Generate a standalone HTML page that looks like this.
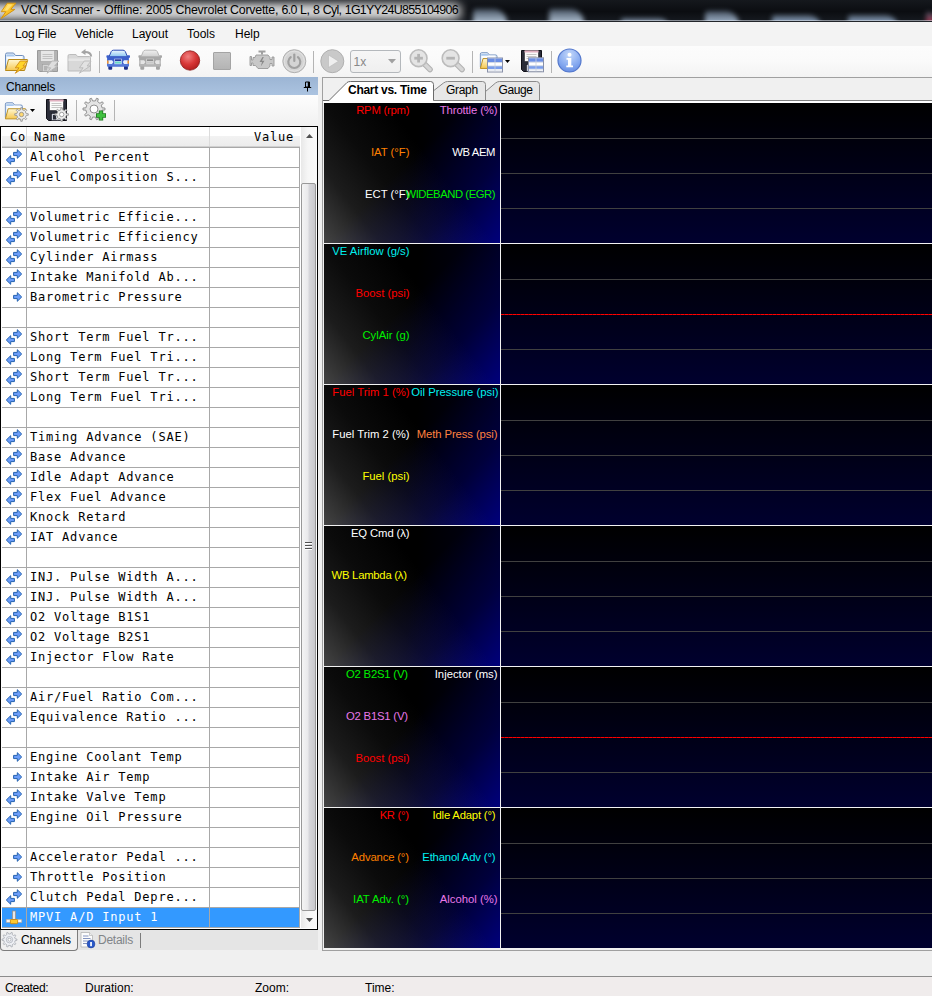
<!DOCTYPE html>
<html><head><meta charset="utf-8"><title>VCM Scanner</title>
<style>
*{box-sizing:border-box;margin:0;padding:0}
html,body{width:932px;height:996px;overflow:hidden;background:#f0f0f0}
body{position:relative;font-family:"Liberation Sans",sans-serif;font-size:12px;color:#000}
.a{position:absolute}
.t{position:absolute;white-space:nowrap;line-height:1}
#title{left:0;top:0;width:932px;height:21px;background:linear-gradient(#15181d,#0b0d11 55%,#161a20);overflow:hidden}
#menubar{left:0;top:22px;width:932px;height:24px;background:#f3f3f3}
#toolbar{left:0;top:46px;width:932px;height:31px;background:linear-gradient(#fcfcfc,#fafafa 50%,#f3f3f3)}
.sep{position:absolute;width:1px;background:#b4b4b4;top:51px;height:22px}
#chhead{left:0;top:77px;width:318px;height:18px;background:linear-gradient(#9cb5d4,#abc3e0)}
#chtool{left:0;top:95px;width:318px;height:31px;background:linear-gradient(#fdfdfd,#f1f1f1)}
#tbl{left:0;top:126px;width:318px;height:804px;border:1px solid #000;border-right-color:#000;background:#fff;overflow:hidden}
.mono{font-family:"DejaVu Sans Mono","Liberation Mono",monospace;font-size:12px;letter-spacing:.8px}
.row{position:absolute;left:0;width:298px;height:20px;border-bottom:1px solid #a8a8a8;border-right:1px solid #a8a8a8}
.row .c1{position:absolute;left:24px;top:0;width:1px;height:20px;background:#a8a8a8}
.row .c2{position:absolute;left:207px;top:0;width:1px;height:20px;background:#a8a8a8}
.row .nm{position:absolute;left:28px;top:2px;white-space:nowrap;line-height:14px}
.row .ri{position:absolute;left:0;top:0}
.sel{background:#3399ff;color:#fff}
#rp{left:322px;top:77px;width:612px;height:874px;border:1px solid #a0a0a0;background:#f0f0f0}
.pan{position:absolute;left:324px;width:176px;height:140px;background:linear-gradient(232deg,#000 40%,#0b0b0b 62%,#1c1c1c 80%,#444 100%),linear-gradient(135deg,#000 45%,#000028 74%,#00006a 100%),linear-gradient(97deg,#000 50%,#00001e 100%);background-blend-mode:screen}
.plot{position:absolute;left:501px;width:431px;height:140px;background:linear-gradient(#000,#00002e)}
.gl{position:absolute;left:501px;width:431px;height:1px;background:#404040}
.lg{position:absolute;white-space:nowrap;font-size:11.300px;line-height:12px;text-align:right}
#status{left:0;top:976px;width:932px;height:20px;background:#f0ecec;border-top:1px solid #8c8c8c}
</style></head><body>
<div class="a" id="title"><div class="a" style="left:473px;top:7px;width:34px;height:19px;margin-top:2px;background:linear-gradient(rgba(150,175,205,.5),#c5d8ec 70%);filter:blur(2.500px);border-radius:3px 14px 0 0;opacity:.85"></div><div class="a" style="left:549px;top:7px;width:35px;height:19px;margin-top:2px;background:linear-gradient(rgba(150,175,205,.5),#c5d8ec 70%);filter:blur(2.500px);border-radius:3px 14px 0 0;opacity:.85"></div><div class="a" style="left:621px;top:16px;width:48px;height:10px;margin-top:2px;background:linear-gradient(rgba(150,175,205,.5),#b8cde6 70%);filter:blur(2.500px);border-radius:3px 14px 0 0;opacity:.85"></div><div class="a" style="left:705px;top:9px;width:34px;height:17px;margin-top:2px;background:linear-gradient(rgba(150,175,205,.5),#b8cde6 70%);filter:blur(2.500px);border-radius:3px 14px 0 0;opacity:.85"></div><div class="a" style="left:772px;top:13px;width:49px;height:13px;margin-top:2px;background:linear-gradient(rgba(150,175,205,.5),#a8c4e6 70%);filter:blur(2.500px);border-radius:3px 14px 0 0;opacity:.85"></div><div class="a" style="left:848px;top:13px;width:50px;height:13px;margin-top:2px;background:linear-gradient(rgba(150,175,205,.5),#a8c4e6 70%);filter:blur(2.500px);border-radius:3px 14px 0 0;opacity:.85"></div><div class="a" style="left:926px;top:10px;width:10px;height:16px;margin-top:2px;background:linear-gradient(rgba(150,175,205,.5),#c03050 70%);filter:blur(2.500px);border-radius:3px 14px 0 0;opacity:.85"></div><div class="a" style="left:-20px;top:3px;width:482px;height:17px;background:#fff;filter:blur(5px);opacity:.76;border-radius:8px"></div><div class="a" style="left:-20px;top:6px;width:470px;height:11px;background:#fff;filter:blur(3px);opacity:.3;border-radius:6px"></div><svg class="a" style="left:0;top:0" width="18" height="20" viewBox="0 0 18 20"><defs><linearGradient id="bg1" x1="0" y1="0" x2="1" y2="1"><stop offset="0" stop-color="#ffe470"/><stop offset=".5" stop-color="#fcc428"/><stop offset="1" stop-color="#f0b020"/></linearGradient></defs><path d="M7.300 3.200H15.800L10.800 9.400H14.800L1.200 18.500 5.800 11.700H1.200Z" fill="url(#bg1)" stroke="#d49410" stroke-width="1" stroke-linejoin="round"/><path d="M8.300 4.500H12.500L7.500 10.500H4.500Z" fill="#fff0a0" opacity=".55"/></svg><div class="a" id="ttxt" style="left:0;top:0;font-size:12.400px;color:#000"><span class="t" style="left:21.0px;top:4px;letter-spacing:-0.382px">VCM</span> <span class="t" style="left:50.7px;top:4px;letter-spacing:-0.551px">Scanner</span> <span class="t" style="left:96.3px;top:4px;letter-spacing:0.259px">-</span> <span class="t" style="left:104.0px;top:4px;letter-spacing:-0.066px">Offline:</span> <span class="t" style="left:145.8px;top:4px;letter-spacing:-0.295px">2005</span> <span class="t" style="left:175.5px;top:4px;letter-spacing:-0.203px">Chevrolet</span> <span class="t" style="left:230.0px;top:4px;letter-spacing:-0.231px">Corvette,</span> <span class="t" style="left:281.5px;top:4px;letter-spacing:-0.678px">6.0</span> <span class="t" style="left:300.0px;top:4px;letter-spacing:-0.322px">L,</span> <span class="t" style="left:313.0px;top:4px;letter-spacing:-0.506px">8</span> <span class="t" style="left:322.7px;top:4px;letter-spacing:-0.661px">Cyl,</span> <span class="t" style="left:344.7px;top:4px;letter-spacing:-0.671px">1G1YY24U855104906</span></div></div><div class="a" style="left:0;top:20px;width:932px;height:1px;background:rgba(225,232,240,.55)"></div><div class="a" style="left:0;top:21px;width:932px;height:1px;background:#23262b"></div><div class="a" id="menubar"><div class="t mi" style="left:15px;top:6px;letter-spacing:-0.18px">Log File</div><div class="t mi" style="left:75px;top:6px;letter-spacing:0px">Vehicle</div><div class="t mi" style="left:132px;top:6px;letter-spacing:0px">Layout</div><div class="t mi" style="left:187px;top:6px;letter-spacing:0px">Tools</div><div class="t mi" style="left:235px;top:6px;letter-spacing:0px">Help</div></div><div class="a" id="toolbar"></div><div class="a" id="chhead"><div class="t" style="left:6px;top:4px;letter-spacing:-.2px">Channels</div><svg class="a" style="left:303px;top:4px" width="9" height="11" viewBox="0 0 9 11"><path d="M2.5 1h4v5h-4z" fill="none" stroke="#000" stroke-width="1"/><path d="M5.5 1v5" stroke="#000" stroke-width="1.4"/><path d="M.8 6.5h7.4M4.5 6.5v4" stroke="#000" stroke-width="1"/></svg></div><div class="a" id="chtool"></div><div class="a mono" id="tbl"><div class="a" style="left:1px;top:0;width:315px;height:802px"><div class="a" style="left:0;top:0;width:298px;height:20px;background:linear-gradient(#fff,#fff 45%,#f2f2f2 50%,#ececec);border-bottom:1px solid #d0d0d0"></div><div class="a" style="left:0;top:20px;width:298px;height:1px;background:#a8a8a8"></div><div class="a" style="left:24px;top:0;width:1px;height:19px;background:#dcdcdc"></div><div class="a" style="left:207px;top:0;width:1px;height:19px;background:#dcdcdc"></div><div class="t" style="left:8px;top:4px">Co</div><div class="t" style="left:32px;top:4px">Name</div><div class="t" style="left:252px;top:4px">Value</div><div class="row" style="top:21px"><svg class="ri" width="24" height="19" viewBox="0 0 24 19"><path d="M11.600 4.400H15.300V1.700L19.700 6 15.300 10.300V7.600H11.600Z" fill="#6a9cf8" stroke="#2462b0" stroke-width="1" stroke-linejoin="round"/><path d="M12.400 10.400H8.700V7.700L4.300 12 8.700 16.300V13.600H12.400Z" fill="#6a9cf8" stroke="#2462b0" stroke-width="1" stroke-linejoin="round"/></svg><i class="c1"></i><i class="c2"></i><span class="nm">Alcohol Percent</span></div><div class="row" style="top:41px"><svg class="ri" width="24" height="19" viewBox="0 0 24 19"><path d="M11.600 4.400H15.300V1.700L19.700 6 15.300 10.300V7.600H11.600Z" fill="#6a9cf8" stroke="#2462b0" stroke-width="1" stroke-linejoin="round"/><path d="M12.400 10.400H8.700V7.700L4.300 12 8.700 16.300V13.600H12.400Z" fill="#6a9cf8" stroke="#2462b0" stroke-width="1" stroke-linejoin="round"/></svg><i class="c1"></i><i class="c2"></i><span class="nm">Fuel Composition S...</span></div><div class="row" style="top:61px"><i class="c1"></i><i class="c2"></i></div><div class="row" style="top:81px"><svg class="ri" width="24" height="19" viewBox="0 0 24 19"><path d="M11.600 4.400H15.300V1.700L19.700 6 15.300 10.300V7.600H11.600Z" fill="#6a9cf8" stroke="#2462b0" stroke-width="1" stroke-linejoin="round"/><path d="M12.400 10.400H8.700V7.700L4.300 12 8.700 16.300V13.600H12.400Z" fill="#6a9cf8" stroke="#2462b0" stroke-width="1" stroke-linejoin="round"/></svg><i class="c1"></i><i class="c2"></i><span class="nm">Volumetric Efficie...</span></div><div class="row" style="top:101px"><svg class="ri" width="24" height="19" viewBox="0 0 24 19"><path d="M11.600 4.400H15.300V1.700L19.700 6 15.300 10.300V7.600H11.600Z" fill="#6a9cf8" stroke="#2462b0" stroke-width="1" stroke-linejoin="round"/><path d="M12.400 10.400H8.700V7.700L4.300 12 8.700 16.300V13.600H12.400Z" fill="#6a9cf8" stroke="#2462b0" stroke-width="1" stroke-linejoin="round"/></svg><i class="c1"></i><i class="c2"></i><span class="nm">Volumetric Efficiency</span></div><div class="row" style="top:121px"><svg class="ri" width="24" height="19" viewBox="0 0 24 19"><path d="M11.600 4.400H15.300V1.700L19.700 6 15.300 10.300V7.600H11.600Z" fill="#6a9cf8" stroke="#2462b0" stroke-width="1" stroke-linejoin="round"/><path d="M12.400 10.400H8.700V7.700L4.300 12 8.700 16.300V13.600H12.400Z" fill="#6a9cf8" stroke="#2462b0" stroke-width="1" stroke-linejoin="round"/></svg><i class="c1"></i><i class="c2"></i><span class="nm">Cylinder Airmass</span></div><div class="row" style="top:141px"><svg class="ri" width="24" height="19" viewBox="0 0 24 19"><path d="M11.600 4.400H15.300V1.700L19.700 6 15.300 10.300V7.600H11.600Z" fill="#6a9cf8" stroke="#2462b0" stroke-width="1" stroke-linejoin="round"/><path d="M12.400 10.400H8.700V7.700L4.300 12 8.700 16.300V13.600H12.400Z" fill="#6a9cf8" stroke="#2462b0" stroke-width="1" stroke-linejoin="round"/></svg><i class="c1"></i><i class="c2"></i><span class="nm">Intake Manifold Ab...</span></div><div class="row" style="top:161px"><svg class="ri" width="24" height="19" viewBox="0 0 24 19"><path d="M11.600 7.400H15.300V4.700L19.700 9 15.300 13.300V10.600H11.600Z" fill="#6a9cf8" stroke="#2462b0" stroke-width="1" stroke-linejoin="round"/></svg><i class="c1"></i><i class="c2"></i><span class="nm">Barometric Pressure</span></div><div class="row" style="top:181px"><i class="c1"></i><i class="c2"></i></div><div class="row" style="top:201px"><svg class="ri" width="24" height="19" viewBox="0 0 24 19"><path d="M11.600 4.400H15.300V1.700L19.700 6 15.300 10.300V7.600H11.600Z" fill="#6a9cf8" stroke="#2462b0" stroke-width="1" stroke-linejoin="round"/><path d="M12.400 10.400H8.700V7.700L4.300 12 8.700 16.300V13.600H12.400Z" fill="#6a9cf8" stroke="#2462b0" stroke-width="1" stroke-linejoin="round"/></svg><i class="c1"></i><i class="c2"></i><span class="nm">Short Term Fuel Tr...</span></div><div class="row" style="top:221px"><svg class="ri" width="24" height="19" viewBox="0 0 24 19"><path d="M11.600 4.400H15.300V1.700L19.700 6 15.300 10.300V7.600H11.600Z" fill="#6a9cf8" stroke="#2462b0" stroke-width="1" stroke-linejoin="round"/><path d="M12.400 10.400H8.700V7.700L4.300 12 8.700 16.300V13.600H12.400Z" fill="#6a9cf8" stroke="#2462b0" stroke-width="1" stroke-linejoin="round"/></svg><i class="c1"></i><i class="c2"></i><span class="nm">Long Term Fuel Tri...</span></div><div class="row" style="top:241px"><svg class="ri" width="24" height="19" viewBox="0 0 24 19"><path d="M11.600 4.400H15.300V1.700L19.700 6 15.300 10.300V7.600H11.600Z" fill="#6a9cf8" stroke="#2462b0" stroke-width="1" stroke-linejoin="round"/><path d="M12.400 10.400H8.700V7.700L4.300 12 8.700 16.300V13.600H12.400Z" fill="#6a9cf8" stroke="#2462b0" stroke-width="1" stroke-linejoin="round"/></svg><i class="c1"></i><i class="c2"></i><span class="nm">Short Term Fuel Tr...</span></div><div class="row" style="top:261px"><svg class="ri" width="24" height="19" viewBox="0 0 24 19"><path d="M11.600 4.400H15.300V1.700L19.700 6 15.300 10.300V7.600H11.600Z" fill="#6a9cf8" stroke="#2462b0" stroke-width="1" stroke-linejoin="round"/><path d="M12.400 10.400H8.700V7.700L4.300 12 8.700 16.300V13.600H12.400Z" fill="#6a9cf8" stroke="#2462b0" stroke-width="1" stroke-linejoin="round"/></svg><i class="c1"></i><i class="c2"></i><span class="nm">Long Term Fuel Tri...</span></div><div class="row" style="top:281px"><i class="c1"></i><i class="c2"></i></div><div class="row" style="top:301px"><svg class="ri" width="24" height="19" viewBox="0 0 24 19"><path d="M11.600 4.400H15.300V1.700L19.700 6 15.300 10.300V7.600H11.600Z" fill="#6a9cf8" stroke="#2462b0" stroke-width="1" stroke-linejoin="round"/><path d="M12.400 10.400H8.700V7.700L4.300 12 8.700 16.300V13.600H12.400Z" fill="#6a9cf8" stroke="#2462b0" stroke-width="1" stroke-linejoin="round"/></svg><i class="c1"></i><i class="c2"></i><span class="nm">Timing Advance (SAE)</span></div><div class="row" style="top:321px"><svg class="ri" width="24" height="19" viewBox="0 0 24 19"><path d="M11.600 4.400H15.300V1.700L19.700 6 15.300 10.300V7.600H11.600Z" fill="#6a9cf8" stroke="#2462b0" stroke-width="1" stroke-linejoin="round"/><path d="M12.400 10.400H8.700V7.700L4.300 12 8.700 16.300V13.600H12.400Z" fill="#6a9cf8" stroke="#2462b0" stroke-width="1" stroke-linejoin="round"/></svg><i class="c1"></i><i class="c2"></i><span class="nm">Base Advance</span></div><div class="row" style="top:341px"><svg class="ri" width="24" height="19" viewBox="0 0 24 19"><path d="M11.600 4.400H15.300V1.700L19.700 6 15.300 10.300V7.600H11.600Z" fill="#6a9cf8" stroke="#2462b0" stroke-width="1" stroke-linejoin="round"/><path d="M12.400 10.400H8.700V7.700L4.300 12 8.700 16.300V13.600H12.400Z" fill="#6a9cf8" stroke="#2462b0" stroke-width="1" stroke-linejoin="round"/></svg><i class="c1"></i><i class="c2"></i><span class="nm">Idle Adapt Advance</span></div><div class="row" style="top:361px"><svg class="ri" width="24" height="19" viewBox="0 0 24 19"><path d="M11.600 4.400H15.300V1.700L19.700 6 15.300 10.300V7.600H11.600Z" fill="#6a9cf8" stroke="#2462b0" stroke-width="1" stroke-linejoin="round"/><path d="M12.400 10.400H8.700V7.700L4.300 12 8.700 16.300V13.600H12.400Z" fill="#6a9cf8" stroke="#2462b0" stroke-width="1" stroke-linejoin="round"/></svg><i class="c1"></i><i class="c2"></i><span class="nm">Flex Fuel Advance</span></div><div class="row" style="top:381px"><svg class="ri" width="24" height="19" viewBox="0 0 24 19"><path d="M11.600 4.400H15.300V1.700L19.700 6 15.300 10.300V7.600H11.600Z" fill="#6a9cf8" stroke="#2462b0" stroke-width="1" stroke-linejoin="round"/><path d="M12.400 10.400H8.700V7.700L4.300 12 8.700 16.300V13.600H12.400Z" fill="#6a9cf8" stroke="#2462b0" stroke-width="1" stroke-linejoin="round"/></svg><i class="c1"></i><i class="c2"></i><span class="nm">Knock Retard</span></div><div class="row" style="top:401px"><svg class="ri" width="24" height="19" viewBox="0 0 24 19"><path d="M11.600 4.400H15.300V1.700L19.700 6 15.300 10.300V7.600H11.600Z" fill="#6a9cf8" stroke="#2462b0" stroke-width="1" stroke-linejoin="round"/><path d="M12.400 10.400H8.700V7.700L4.300 12 8.700 16.300V13.600H12.400Z" fill="#6a9cf8" stroke="#2462b0" stroke-width="1" stroke-linejoin="round"/></svg><i class="c1"></i><i class="c2"></i><span class="nm">IAT Advance</span></div><div class="row" style="top:421px"><i class="c1"></i><i class="c2"></i></div><div class="row" style="top:441px"><svg class="ri" width="24" height="19" viewBox="0 0 24 19"><path d="M11.600 4.400H15.300V1.700L19.700 6 15.300 10.300V7.600H11.600Z" fill="#6a9cf8" stroke="#2462b0" stroke-width="1" stroke-linejoin="round"/><path d="M12.400 10.400H8.700V7.700L4.300 12 8.700 16.300V13.600H12.400Z" fill="#6a9cf8" stroke="#2462b0" stroke-width="1" stroke-linejoin="round"/></svg><i class="c1"></i><i class="c2"></i><span class="nm">INJ. Pulse Width A...</span></div><div class="row" style="top:461px"><svg class="ri" width="24" height="19" viewBox="0 0 24 19"><path d="M11.600 4.400H15.300V1.700L19.700 6 15.300 10.300V7.600H11.600Z" fill="#6a9cf8" stroke="#2462b0" stroke-width="1" stroke-linejoin="round"/><path d="M12.400 10.400H8.700V7.700L4.300 12 8.700 16.300V13.600H12.400Z" fill="#6a9cf8" stroke="#2462b0" stroke-width="1" stroke-linejoin="round"/></svg><i class="c1"></i><i class="c2"></i><span class="nm">INJ. Pulse Width A...</span></div><div class="row" style="top:481px"><svg class="ri" width="24" height="19" viewBox="0 0 24 19"><path d="M11.600 4.400H15.300V1.700L19.700 6 15.300 10.300V7.600H11.600Z" fill="#6a9cf8" stroke="#2462b0" stroke-width="1" stroke-linejoin="round"/><path d="M12.400 10.400H8.700V7.700L4.300 12 8.700 16.300V13.600H12.400Z" fill="#6a9cf8" stroke="#2462b0" stroke-width="1" stroke-linejoin="round"/></svg><i class="c1"></i><i class="c2"></i><span class="nm">O2 Voltage B1S1</span></div><div class="row" style="top:501px"><svg class="ri" width="24" height="19" viewBox="0 0 24 19"><path d="M11.600 4.400H15.300V1.700L19.700 6 15.300 10.300V7.600H11.600Z" fill="#6a9cf8" stroke="#2462b0" stroke-width="1" stroke-linejoin="round"/><path d="M12.400 10.400H8.700V7.700L4.300 12 8.700 16.300V13.600H12.400Z" fill="#6a9cf8" stroke="#2462b0" stroke-width="1" stroke-linejoin="round"/></svg><i class="c1"></i><i class="c2"></i><span class="nm">O2 Voltage B2S1</span></div><div class="row" style="top:521px"><svg class="ri" width="24" height="19" viewBox="0 0 24 19"><path d="M11.600 4.400H15.300V1.700L19.700 6 15.300 10.300V7.600H11.600Z" fill="#6a9cf8" stroke="#2462b0" stroke-width="1" stroke-linejoin="round"/><path d="M12.400 10.400H8.700V7.700L4.300 12 8.700 16.300V13.600H12.400Z" fill="#6a9cf8" stroke="#2462b0" stroke-width="1" stroke-linejoin="round"/></svg><i class="c1"></i><i class="c2"></i><span class="nm">Injector Flow Rate</span></div><div class="row" style="top:541px"><i class="c1"></i><i class="c2"></i></div><div class="row" style="top:561px"><svg class="ri" width="24" height="19" viewBox="0 0 24 19"><path d="M11.600 4.400H15.300V1.700L19.700 6 15.300 10.300V7.600H11.600Z" fill="#6a9cf8" stroke="#2462b0" stroke-width="1" stroke-linejoin="round"/><path d="M12.400 10.400H8.700V7.700L4.300 12 8.700 16.300V13.600H12.400Z" fill="#6a9cf8" stroke="#2462b0" stroke-width="1" stroke-linejoin="round"/></svg><i class="c1"></i><i class="c2"></i><span class="nm">Air/Fuel Ratio Com...</span></div><div class="row" style="top:581px"><svg class="ri" width="24" height="19" viewBox="0 0 24 19"><path d="M11.600 4.400H15.300V1.700L19.700 6 15.300 10.300V7.600H11.600Z" fill="#6a9cf8" stroke="#2462b0" stroke-width="1" stroke-linejoin="round"/><path d="M12.400 10.400H8.700V7.700L4.300 12 8.700 16.300V13.600H12.400Z" fill="#6a9cf8" stroke="#2462b0" stroke-width="1" stroke-linejoin="round"/></svg><i class="c1"></i><i class="c2"></i><span class="nm">Equivalence Ratio ...</span></div><div class="row" style="top:601px"><i class="c1"></i><i class="c2"></i></div><div class="row" style="top:621px"><svg class="ri" width="24" height="19" viewBox="0 0 24 19"><path d="M11.600 7.400H15.300V4.700L19.700 9 15.300 13.300V10.600H11.600Z" fill="#6a9cf8" stroke="#2462b0" stroke-width="1" stroke-linejoin="round"/></svg><i class="c1"></i><i class="c2"></i><span class="nm">Engine Coolant Temp</span></div><div class="row" style="top:641px"><svg class="ri" width="24" height="19" viewBox="0 0 24 19"><path d="M11.600 7.400H15.300V4.700L19.700 9 15.300 13.300V10.600H11.600Z" fill="#6a9cf8" stroke="#2462b0" stroke-width="1" stroke-linejoin="round"/></svg><i class="c1"></i><i class="c2"></i><span class="nm">Intake Air Temp</span></div><div class="row" style="top:661px"><svg class="ri" width="24" height="19" viewBox="0 0 24 19"><path d="M11.600 4.400H15.300V1.700L19.700 6 15.300 10.300V7.600H11.600Z" fill="#6a9cf8" stroke="#2462b0" stroke-width="1" stroke-linejoin="round"/><path d="M12.400 10.400H8.700V7.700L4.300 12 8.700 16.300V13.600H12.400Z" fill="#6a9cf8" stroke="#2462b0" stroke-width="1" stroke-linejoin="round"/></svg><i class="c1"></i><i class="c2"></i><span class="nm">Intake Valve Temp</span></div><div class="row" style="top:681px"><svg class="ri" width="24" height="19" viewBox="0 0 24 19"><path d="M11.600 4.400H15.300V1.700L19.700 6 15.300 10.300V7.600H11.600Z" fill="#6a9cf8" stroke="#2462b0" stroke-width="1" stroke-linejoin="round"/><path d="M12.400 10.400H8.700V7.700L4.300 12 8.700 16.300V13.600H12.400Z" fill="#6a9cf8" stroke="#2462b0" stroke-width="1" stroke-linejoin="round"/></svg><i class="c1"></i><i class="c2"></i><span class="nm">Engine Oil Pressure</span></div><div class="row" style="top:701px"><i class="c1"></i><i class="c2"></i></div><div class="row" style="top:721px"><svg class="ri" width="24" height="19" viewBox="0 0 24 19"><path d="M11.600 7.400H15.300V4.700L19.700 9 15.300 13.300V10.600H11.600Z" fill="#6a9cf8" stroke="#2462b0" stroke-width="1" stroke-linejoin="round"/></svg><i class="c1"></i><i class="c2"></i><span class="nm">Accelerator Pedal ...</span></div><div class="row" style="top:741px"><svg class="ri" width="24" height="19" viewBox="0 0 24 19"><path d="M11.600 7.400H15.300V4.700L19.700 9 15.300 13.300V10.600H11.600Z" fill="#6a9cf8" stroke="#2462b0" stroke-width="1" stroke-linejoin="round"/></svg><i class="c1"></i><i class="c2"></i><span class="nm">Throttle Position</span></div><div class="row" style="top:761px"><svg class="ri" width="24" height="19" viewBox="0 0 24 19"><path d="M11.600 4.400H15.300V1.700L19.700 6 15.300 10.300V7.600H11.600Z" fill="#6a9cf8" stroke="#2462b0" stroke-width="1" stroke-linejoin="round"/><path d="M12.400 10.400H8.700V7.700L4.300 12 8.700 16.300V13.600H12.400Z" fill="#6a9cf8" stroke="#2462b0" stroke-width="1" stroke-linejoin="round"/></svg><i class="c1"></i><i class="c2"></i><span class="nm">Clutch Pedal Depre...</span></div><div class="row sel" style="top:781px"><svg class="ri" width="24" height="19" viewBox="0 0 24 19"><rect x="10.500" y="3" width="3" height="8.500" fill="#e8e8e8" stroke="#9a8c80" stroke-width=".7"/><rect x="4.200" y="11.300" width="15.600" height="3.200" fill="#f4f4f4" stroke="#a8a098" stroke-width=".6"/><rect x="8.400" y="11.500" width="7.200" height="4.200" rx=".8" fill="#fcc830" stroke="#c88000" stroke-width=".8"/></svg><i class="c1"></i><i class="c2"></i><span class="nm">MPVI A/D Input 1</span></div><div class="a" style="left:299px;top:0;width:17px;height:801px;background:linear-gradient(90deg,#e8e8e8,#f6f6f6 40%,#fafafa)"></div><div class="a" style="left:299px;top:56px;width:15px;height:728px;border:1px solid #989898;border-radius:2px;background:linear-gradient(90deg,#f4f4f4,#e9e9eb 45%,#d6d6da 55%,#c8c8cc)"></div><svg class="a" style="left:304px;top:7px" width="7" height="4" viewBox="0 0 7 4"><path d="M0 4L3.500 0 7 4z" fill="#505050"/></svg><svg class="a" style="left:304px;top:791px" width="7" height="4" viewBox="0 0 7 4"><path d="M0 0L3.500 4 7 0z" fill="#505050"/></svg><div class="a" style="left:303px;top:415px;width:7px;height:9px;background:repeating-linear-gradient(#505050 0,#505050 1px,#fff 1px,#fff 2px,transparent 2px,transparent 3px)"></div></div></div><div class="a" style="left:0;top:930px;width:318px;height:20px;background:#e5e5e5"></div><div class="a" style="left:0;top:930px;width:78px;height:21px;background:#f0f0f0;border:1px solid #7c7c7c;border-top:none;border-radius:0 0 4px 4px"></div><svg class="a" style="left:1px;top:931px" width="18" height="18" viewBox="0 0 18 18"><path d="M14.23 7.83 L15.97 8.09 L15.97 9.31 L14.23 9.57 L13.65 11.37 L14.91 12.60 L14.19 13.59 L12.63 12.78 L11.10 13.88 L11.39 15.62 L10.23 16.00 L9.44 14.42 L7.56 14.42 L6.77 16.00 L5.61 15.62 L5.90 13.88 L4.37 12.78 L2.81 13.59 L2.09 12.60 L3.35 11.37 L2.77 9.57 L1.03 9.31 L1.03 8.09 L2.77 7.83 L3.35 6.03 L2.09 4.80 L2.81 3.81 L4.37 4.62 L5.90 3.52 L5.61 1.78 L6.77 1.40 L7.56 2.98 L9.44 2.98 L10.23 1.40 L11.39 1.78 L11.10 3.52 L12.63 4.62 L14.19 3.81 L14.91 4.80 L13.65 6.03Z" fill="#eef0f4" stroke="#9ca0a8" stroke-width=".7" stroke-linejoin="round"/><circle cx="8.5" cy="8.7" r="3.2" fill="none" stroke="#b0b4bc" stroke-width=".8"/><circle cx="8.5" cy="8.7" r="1.500" fill="#fff" stroke="#9ca0a8" stroke-width=".7"/></svg><div class="t" style="left:21px;top:934px;letter-spacing:-.1px" id="bt1">Channels</div><svg class="a" style="left:80px;top:931px" width="16" height="18" viewBox="0 0 16 18"><path d="M1 1.500H9.500L12.500 4.500V16H1Z" fill="#fcfcfc" stroke="#b4b4b4" stroke-width=".8"/><path d="M9.500 1.500V4.500H12.500" fill="#eee" stroke="#b4b4b4" stroke-width=".7"/><path d="M3 5h5.500M3 7.500h7.500M3 10h5M3 12.500h4" stroke="#8494c0" stroke-width="1"/><circle cx="11" cy="13" r="3.900" fill="#2858c8" stroke="#1c3c98" stroke-width=".6"/><rect x="10.200" y="11" width="1.700" height="4.200" fill="#fff"/></svg><div class="t" style="left:98px;top:934px;color:#808488;letter-spacing:-.25px" id="bt2">Details</div><div class="a" style="left:140px;top:933px;width:1px;height:15px;background:#7c7c7c"></div><div class="a" id="status"><div class="t" style="left:5px;top:5px;letter-spacing:-.35px">Created:</div><div class="t" style="left:85px;top:5px">Duration:</div><div class="t" style="left:255px;top:5px">Zoom:</div><div class="t" style="left:365px;top:5px">Time:</div></div><svg class="a" style="left:4px;top:50px" width="26" height="24" viewBox="0 0 26 24" ><defs><linearGradient id="fg" x1="0" y1="0" x2="0" y2="1"><stop offset="0" stop-color="#fff8d4"/><stop offset="1" stop-color="#f6c850"/></linearGradient></defs><path d="M1.500 4.500Q1.500 3 3 3H9.500L11.500 5.500H18.500Q20 5.500 20 7V19H1.500Z" fill="#e4effb" stroke="#6c8cbc"/><path d="M3 6h15v3H3z" fill="#fff" opacity=".8"/><path d="M2.500 4.500h7l1.500 2H2.500z" fill="#a8c8ee"/><path d="M4.500 9.500H23Q24 9.500 23.600 10.500L20.500 20.500H1.500Z" fill="url(#fg)" stroke="#b88a18"/><path transform="translate(11.3,11) scale(0.8)" d="M6.100 0H14.600L9.600 6.200H13.600L0 15.300 4.600 8.500H0Z" fill="#ffd428" stroke="#d08a10" stroke-width="1.100" stroke-linejoin="round"/></svg><svg class="a" style="left:36px;top:49px" width="26" height="25" viewBox="0 0 26 25" ><path d="M1.500 1.500H21.500V22.500H3.500L1.500 20.500Z" fill="#b4b4b4" stroke="#9a9a9a"/><rect x="4.500" y="1.500" width="14" height="11" fill="#e6e6e6" stroke="#9a9a9a" stroke-width=".5"/><path d="M6.500 5.500h10M6.500 7.500h10M6.500 9.500h10" stroke="#b8b8b8" stroke-width=".8"/><rect x="6.500" y="15.500" width="10" height="7" fill="#d4d4d4" stroke="#9a9a9a" stroke-width=".5"/><rect x="8" y="17" width="3" height="4.500" fill="#b4b4b4"/><path transform="translate(11,12) scale(0.8)" d="M6.100 0H14.600L9.600 6.200H13.600L0 15.300 4.600 8.500H0Z" fill="#dedede" stroke="#b4b4b4" stroke-width="1.100" stroke-linejoin="round"/></svg><svg class="a" style="left:67px;top:49px" width="27" height="25" viewBox="0 0 27 25" ><path d="M1 7Q1 5.500 2.500 5.500H9L10.500 7.500H22.500Q23.500 7.500 23.500 8.500V22H1Z" fill="#d8d8d8" stroke="#bcbcbc"/><path d="M1.500 9.500H23V12H1.500Z" fill="#e6e6e6"/><path transform="translate(12.4,12) scale(0.8)" d="M6.100 0H14.600L9.600 6.200H13.600L0 15.300 4.600 8.500H0Z" fill="#e2e2e2" stroke="#b8b8b8" stroke-width="1.100" stroke-linejoin="round"/><path d="M24.200 7.500Q23.800 3 18 3" fill="none" stroke="#a4a4a4" stroke-width="2"/><path d="M18.500 0L14 3.200 18.500 6z" fill="#a4a4a4"/></svg><div class="sep" style="left:99px"></div><svg class="a" style="left:106px;top:49px" width="25" height="22" viewBox="0 0 25 22" ><defs><linearGradient id="cgb" x1="0" y1="0" x2="0" y2="1"><stop offset="0" stop-color="#eef8ff"/><stop offset="1" stop-color="#88c4f0"/></linearGradient></defs><rect x=".4" y="6.300" width="3" height="2.600" rx=".8" fill="#3c60cc"/><rect x="21" y="6.300" width="3" height="2.600" rx=".8" fill="#3c60cc"/><rect x="2.300" y="16" width="3.900" height="4.800" rx="1" fill="#1c3088"/><rect x="18" y="16" width="3.900" height="4.800" rx="1" fill="#1c3088"/><path d="M3 7.800L5.200 2.600Q5.800 1.200 7.500 1.200H17Q18.700 1.200 19.300 2.600L21.500 7.800Z" fill="url(#cgb)" stroke="#2c4cb4" stroke-width="1"/><path d="M2.500 7.400H22Q22.900 7.400 22.900 8.500V16.500Q22.900 17.500 22 17.500H2Q1.100 17.500 1.100 16.500V8.500Q1.100 7.400 2.500 7.400Z" fill="#3c60cc"/><rect x="1.100" y="14.900" width="21.800" height="2.600" rx=".8" fill="#5478d8"/><path d="M2.300 11.200H6L7.500 13 6 14.900H2.300Z" fill="#e8f0fc"/><path d="M21.800 11.200H18L16.800 13 18 14.900H21.800Z" fill="#e8f0fc"/><rect x="1.100" y="11.500" width="1.400" height="3.200" fill="#ff9820"/><rect x="21.500" y="11.500" width="1.400" height="3.200" fill="#ff9820"/><rect x="8.300" y="9.700" width="7.500" height="5.500" fill="#e8f0fc" opacity=".85"/><rect x="9" y="10.300" width="6.100" height="1.700" fill="#2838a0"/><rect x="9" y="12.600" width="6.100" height="1.900" fill="#68dcc4"/></svg><svg class="a" style="left:138px;top:49px" width="25" height="22" viewBox="0 0 25 22" ><defs><linearGradient id="cgg" x1="0" y1="0" x2="0" y2="1"><stop offset="0" stop-color="#f0f0f0"/><stop offset="1" stop-color="#cfcfcf"/></linearGradient></defs><rect x=".4" y="6.300" width="3" height="2.600" rx=".8" fill="#a8a8a8"/><rect x="21" y="6.300" width="3" height="2.600" rx=".8" fill="#a8a8a8"/><rect x="2.300" y="16" width="3.900" height="4.800" rx="1" fill="#a4a4a4"/><rect x="18" y="16" width="3.900" height="4.800" rx="1" fill="#a4a4a4"/><path d="M3 7.800L5.200 2.600Q5.800 1.200 7.500 1.200H17Q18.700 1.200 19.300 2.600L21.500 7.800Z" fill="url(#cgg)" stroke="#b8b8b8" stroke-width="1"/><path d="M2.500 7.400H22Q22.900 7.400 22.900 8.500V16.500Q22.900 17.500 22 17.500H2Q1.100 17.500 1.100 16.500V8.500Q1.100 7.400 2.500 7.400Z" fill="#a8a8a8"/><rect x="1.100" y="14.900" width="21.800" height="2.600" rx=".8" fill="#b4b4b4"/><path d="M2.300 11.200H6L7.500 13 6 14.900H2.300Z" fill="#e4e4e4"/><path d="M21.800 11.200H18L16.800 13 18 14.900H21.800Z" fill="#e4e4e4"/><rect x="1.100" y="11.500" width="1.400" height="3.200" fill="#c4c4c4"/><rect x="21.500" y="11.500" width="1.400" height="3.200" fill="#c4c4c4"/><rect x="8.300" y="9.700" width="7.500" height="5.500" fill="#e4e4e4" opacity=".85"/><rect x="9" y="10.300" width="6.100" height="1.700" fill="#8c8c8c"/><rect x="9" y="12.600" width="6.100" height="1.900" fill="#c8c8c8"/></svg><svg class="a" style="left:179px;top:50px" width="22" height="22" viewBox="0 0 22 22" ><defs><radialGradient id="rg" cx=".4" cy=".3" r=".8"><stop offset="0" stop-color="#f08080"/><stop offset=".5" stop-color="#d83838"/><stop offset="1" stop-color="#a81818"/></radialGradient></defs><circle cx="11" cy="10.500" r="9.700" fill="url(#rg)" stroke="#8c1c1c" stroke-width=".8"/></svg><div class="a" style="left:213px;top:52px;width:18px;height:18px;background:linear-gradient(#c6c6c6,#b4b4b4);border:1px solid #a4a4a4;border-radius:1px"></div><svg class="a" style="left:249px;top:50px" width="26" height="20" viewBox="0 0 26 20" ><path d="M9.500 1.500h7M13 1.500v3" stroke="#a0a0a0" stroke-width="2"/><path d="M7 5H19L21 7.500V9.500H23V7H25V16H23V13.500H21V16L19 18.500H9L6.500 15.500H4V13H2.500V15.500H1V6.500H2.500V10H4V7.500H6Z" fill="#c8c8c8" stroke="#999" stroke-width=".9"/><path d="M13.500 7L10.500 12H13L11.800 16.500 15.500 10.800H13L14.800 7z" fill="#888"/></svg><svg class="a" style="left:282px;top:49px" width="25" height="25" viewBox="0 0 25 25" ><circle cx="12.300" cy="12.200" r="11.500" fill="#d4d4d4" stroke="#b0b0b0"/><circle cx="12.300" cy="12.200" r="10" fill="none" stroke="#e2e2e2" stroke-width="1"/><path d="M8.700 8.200A6 6 0 1 0 15.900 8.200" fill="none" stroke="#a0a0a0" stroke-width="2.200" stroke-linecap="round"/><path d="M12.300 5.500V12" stroke="#a0a0a0" stroke-width="2.200" stroke-linecap="round"/></svg><div class="sep" style="left:313px"></div><svg class="a" style="left:320px;top:49px" width="25" height="25" viewBox="0 0 25 25" ><circle cx="12.300" cy="12.200" r="11.500" fill="#c9c9c9" stroke="#b0b0b0"/><path d="M8.500 6L18.500 12.200 8.500 18.500z" fill="#efefef" stroke="#b8b8b8" stroke-width=".6"/></svg><div class="a" style="left:350px;top:50px;width:51px;height:23px;border:1px solid #b4b8bc;border-radius:3px;background:linear-gradient(#f6f6f6,#efefef)"></div><div class="t" style="left:353.500px;top:56px;font-size:12px;color:#888" id="onex">1x</div><svg class="a" style="left:388px;top:59px" width="8" height="5" viewBox="0 0 8 5" ><path d="M0 0h8L4 4.500z" fill="#a0a0a0"/></svg><svg class="a" style="left:409px;top:49px" width="24" height="24" viewBox="0 0 24 24" ><path d="M16 15.500L21 20.500" stroke="#b0b0b0" stroke-width="5.500" stroke-linecap="round"/><path d="M16 15.500L21 20.500" stroke="#d6d6d6" stroke-width="3.500" stroke-linecap="round"/><circle cx="9.600" cy="9.200" r="8.400" fill="#e4e4e4" stroke="#bcbcbc" stroke-width="1.600"/><path d="M5.300 9.200h8.600" stroke="#b4b4b4" stroke-width="2.800"/><path d="M9.600 4.900v8.600" stroke="#b4b4b4" stroke-width="2.800"/></svg><svg class="a" style="left:441px;top:49px" width="24" height="24" viewBox="0 0 24 24" ><path d="M16 15.500L21 20.500" stroke="#b0b0b0" stroke-width="5.500" stroke-linecap="round"/><path d="M16 15.500L21 20.500" stroke="#d6d6d6" stroke-width="3.500" stroke-linecap="round"/><circle cx="9.600" cy="9.200" r="8.400" fill="#e4e4e4" stroke="#bcbcbc" stroke-width="1.600"/><path d="M5.300 9.200h8.600" stroke="#b4b4b4" stroke-width="2.800"/></svg><div class="sep" style="left:472px"></div><svg class="a" style="left:479px;top:50px" width="26" height="24" viewBox="0 0 26 24" ><g transform="scale(.9)"><defs><linearGradient id="fg" x1="0" y1="0" x2="0" y2="1"><stop offset="0" stop-color="#fff8d4"/><stop offset="1" stop-color="#f6c850"/></linearGradient></defs><path d="M1.500 4.500Q1.500 3 3 3H9.500L11.500 5.500H18.500Q20 5.500 20 7V19H1.500Z" fill="#e4effb" stroke="#6c8cbc"/><path d="M3 6h15v3H3z" fill="#fff" opacity=".8"/><path d="M2.500 4.500h7l1.500 2H2.500z" fill="#a8c8ee"/><path d="M4.500 9.500H23Q24 9.500 23.600 10.500L20.500 20.500H1.500Z" fill="url(#fg)" stroke="#b88a18"/></g><g transform="translate(8,7.5)"><rect x=".5" y=".5" width="15" height="14" fill="#fff" stroke="#8890a8"/><rect x="1" y="1" width="14" height="3.500" fill="#6a8ee4"/><rect x="1" y="8.500" width="14" height="3" fill="#7a9eec"/><path d="M8 1v13M1 5h14M1 8.500h14M1 12.500h14" stroke="#c8d0e0" stroke-width=".8"/></g></svg><svg class="a" style="left:505px;top:60px" width="5" height="3" viewBox="0 0 5 3" ><path d="M0 0h5L2.500 3z" fill="#000"/></svg><svg class="a" style="left:520px;top:49px" width="26" height="25" viewBox="0 0 26 25" ><path d="M1.500 1.500H21.500V22.500H3.500L1.500 20.500Z" fill="#2a2c38" stroke="#101018"/><rect x="4.500" y="1.500" width="14" height="11" fill="#fafafa" stroke="#101018" stroke-width=".5"/><rect x="4.500" y="1.500" width="14" height="2" fill="#e0b0c0"/><path d="M6.500 5.500h10M6.500 7.500h10M6.500 9.500h10" stroke="#b8b8b8" stroke-width=".8"/><rect x="6.500" y="15.500" width="10" height="7" fill="#c8ccd8" stroke="#101018" stroke-width=".5"/><rect x="8" y="17" width="3" height="4.500" fill="#2a2c38"/><g transform="translate(8,8.3)"><rect x=".5" y=".5" width="15" height="14" fill="#fff" stroke="#8890a8"/><rect x="1" y="1" width="14" height="3.500" fill="#6a8ee4"/><rect x="1" y="8.500" width="14" height="3" fill="#7a9eec"/><path d="M8 1v13M1 5h14M1 8.500h14M1 12.500h14" stroke="#c8d0e0" stroke-width=".8"/></g></svg><div class="sep" style="left:551px"></div><svg class="a" style="left:557px;top:48px" width="26" height="26" viewBox="0 0 26 26" ><defs><radialGradient id="ig" cx=".5" cy=".25" r=".9"><stop offset="0" stop-color="#c4d8fa"/><stop offset=".55" stop-color="#86aaf0"/><stop offset="1" stop-color="#5880dc"/></radialGradient></defs><circle cx="12.500" cy="12.500" r="11.500" fill="url(#ig)" stroke="#5478cc" stroke-width="1.200"/><circle cx="12.500" cy="6.800" r="2" fill="#fff"/><path d="M9.500 10h4.800v7.500h1.700v1.800H9.300v-1.800H11v-5.700H9.500z" fill="#fff"/></svg><svg class="a" style="left:4px;top:100px" width="26" height="22" viewBox="0 0 26 22" ><g transform="scale(.92)"><defs><linearGradient id="fg" x1="0" y1="0" x2="0" y2="1"><stop offset="0" stop-color="#fff8d4"/><stop offset="1" stop-color="#f6c850"/></linearGradient></defs><path d="M1.500 4.500Q1.500 3 3 3H9.500L11.500 5.500H18.500Q20 5.500 20 7V19H1.500Z" fill="#e4effb" stroke="#6c8cbc"/><path d="M3 6h15v3H3z" fill="#fff" opacity=".8"/><path d="M2.500 4.500h7l1.500 2H2.500z" fill="#a8c8ee"/><path d="M4.500 9.500H23Q24 9.500 23.600 10.500L20.500 20.500H1.500Z" fill="url(#fg)" stroke="#b88a18"/></g><path d="M22.23 13.67 L24.26 13.75 L24.26 15.25 L22.23 15.33 L21.43 17.26 L22.81 18.75 L21.75 19.81 L20.26 18.43 L18.33 19.23 L18.25 21.26 L16.75 21.26 L16.67 19.23 L14.74 18.43 L13.25 19.81 L12.19 18.75 L13.57 17.26 L12.77 15.33 L10.74 15.25 L10.74 13.75 L12.77 13.67 L13.57 11.74 L12.19 10.25 L13.25 9.19 L14.74 10.57 L16.67 9.77 L16.75 7.74 L18.25 7.74 L18.33 9.77 L20.26 10.57 L21.75 9.19 L22.81 10.25 L21.43 11.74Z" fill="#ececec" stroke="#8c8c8c" stroke-width="0.8" stroke-linejoin="round"/><circle cx="17.5" cy="14.5" r="2.2" fill="#ffd870" stroke="#8c8c8c" stroke-width="0.8"/></svg><svg class="a" style="left:30px;top:109px" width="5" height="3" viewBox="0 0 5 3" ><path d="M0 0h5L2.500 3z" fill="#000"/></svg><svg class="a" style="left:45px;top:98px" width="26" height="25" viewBox="0 0 26 25" ><path d="M1.500 1.500H21.500V22.500H3.500L1.500 20.500Z" fill="#2a2c38" stroke="#101018"/><rect x="4.500" y="1.500" width="14" height="11" fill="#fafafa" stroke="#101018" stroke-width=".5"/><rect x="4.500" y="1.500" width="14" height="2" fill="#e0b0c0"/><path d="M6.500 5.500h10M6.500 7.500h10M6.500 9.500h10" stroke="#b8b8b8" stroke-width=".8"/><rect x="6.500" y="15.500" width="10" height="7" fill="#c8ccd8" stroke="#101018" stroke-width=".5"/><rect x="8" y="17" width="3" height="4.500" fill="#2a2c38"/><path d="M21.43 15.67 L23.46 15.75 L23.46 17.25 L21.43 17.33 L20.63 19.26 L22.01 20.75 L20.95 21.81 L19.46 20.43 L17.53 21.23 L17.45 23.26 L15.95 23.26 L15.87 21.23 L13.94 20.43 L12.45 21.81 L11.39 20.75 L12.77 19.26 L11.97 17.33 L9.94 17.25 L9.94 15.75 L11.97 15.67 L12.77 13.74 L11.39 12.25 L12.45 11.19 L13.94 12.57 L15.87 11.77 L15.95 9.74 L17.45 9.74 L17.53 11.77 L19.46 12.57 L20.95 11.19 L22.01 12.25 L20.63 13.74Z" fill="#ececec" stroke="#8c8c8c" stroke-width="0.8" stroke-linejoin="round"/><circle cx="16.7" cy="16.5" r="2.2" fill="#fff" stroke="#8c8c8c" stroke-width="0.8"/></svg><div class="sep" style="left:76px;top:100px;height:21px"></div><svg class="a" style="left:82px;top:97px" width="27" height="26" viewBox="0 0 27 26" ><path d="M20.12 10.87 L22.96 11.03 L22.96 12.97 L20.12 13.13 L19.23 15.86 L21.43 17.66 L20.30 19.22 L17.91 17.69 L15.58 19.38 L16.31 22.12 L14.47 22.72 L13.44 20.07 L10.56 20.07 L9.53 22.72 L7.69 22.12 L8.42 19.38 L6.09 17.69 L3.70 19.22 L2.57 17.66 L4.77 15.86 L3.88 13.13 L1.04 12.97 L1.04 11.03 L3.88 10.87 L4.77 8.14 L2.57 6.34 L3.70 4.78 L6.09 6.31 L8.42 4.62 L7.69 1.88 L9.53 1.28 L10.56 3.93 L13.44 3.93 L14.47 1.28 L16.31 1.88 L15.58 4.62 L17.91 6.31 L20.30 4.78 L21.43 6.34 L19.23 8.14Z" fill="#e4e4e4" stroke="#909090" stroke-width="1" stroke-linejoin="round"/><circle cx="12" cy="12" r="4" fill="#fff" stroke="#909090" stroke-width="1"/><path d="M14 18.500h10M19 13.500v10" stroke="#207820" stroke-width="4.400"/><path d="M14.800 18.500h8.400M19 14.300v8.400" stroke="#40c040" stroke-width="2.800"/></svg><div class="sep" style="left:114px;top:100px;height:21px"></div><div class="a" id="rp"></div><div class="a" style="left:323px;top:100px;width:609px;height:1px;background:#808080"></div><div class="a" style="left:323px;top:101px;width:609px;height:2px;background:#fff"></div><svg class="a" style="left:323px;top:79px" width="230" height="23" viewBox="0 0 230 23"><path d="M152 21.500L172.500 4Q174.500 2.500 176.500 2.500H213.500Q216.500 2.500 216.500 5.500V21.500Z" fill="#e7e7e7" stroke="#8a8a8a"/><path d="M98 21.500L120.500 4Q122.500 2.500 124.500 2.500H159.500Q162.500 2.500 162.500 5.500V21.500Z" fill="#e7e7e7" stroke="#8a8a8a"/><path d="M0 21.500H230" stroke="#808080"/><path d="M6 21.500L24 3.500Q25.200 2.500 27.500 2.500H107.500Q110.500 2.500 110.500 5.500V22.500H5" fill="#fff" stroke="none"/><path d="M0 21.500H6L24 3.500Q25.200 2.500 27.500 2.500H107.500Q110.500 2.500 110.500 5.500V21.500" fill="none" stroke="#6a6a6a"/></svg><div class="t" style="left:348px;top:84px;font-weight:bold;letter-spacing:-.27px" id="tab1">Chart vs. Time</div><div class="t" style="left:446px;top:84px;letter-spacing:-.3px" id="tab2">Graph</div><div class="t" style="left:498.500px;top:84px;letter-spacing:-.4px" id="tab3">Gauge</div><div class="a" style="left:324px;top:103px;width:608px;height:845px;background:#f2f2f2"></div><div class="pan" style="top:103px"></div><div class="plot" style="top:103px"></div><div class="gl" style="top:138px"></div><div class="gl" style="top:173px"></div><div class="gl" style="top:208px"></div><div class="lg" style="right:522.74px;top:103.5px;color:#ff0000;letter-spacing:-0.24px">RPM (rpm)</div><div class="lg" style="right:434.62px;top:103.5px;color:#e878e8;letter-spacing:-0.12px">Throttle (%)</div><div class="lg" style="right:522.50px;top:145.5px;color:#ff8000">IAT (°F)</div><div class="lg" style="right:436.90px;top:145.5px;color:#ffffff;letter-spacing:-0.4px">WB AEM</div><div class="lg" style="right:522.50px;top:187.5px;color:#ffffff">ECT (°F)</div><div class="lg" style="right:436.96px;top:187.5px;color:#00f000;letter-spacing:-0.46px">WIDEBAND (EGR)</div><div class="pan" style="top:244px"></div><div class="plot" style="top:244px"></div><div class="gl" style="top:279px"></div><div class="gl" style="top:314px;background:repeating-linear-gradient(90deg,#ff0000 0,#ff0000 3px,#b80000 3px,#b80000 4px)"></div><div class="gl" style="top:349px"></div><div class="lg" style="right:522.50px;top:244.5px;color:#00f0f0">VE Airflow (g/s)</div><div class="lg" style="right:522.50px;top:286.5px;color:#ff0000">Boost (psi)</div><div class="lg" style="right:522.50px;top:328.5px;color:#00f000">CylAir (g)</div><div class="pan" style="top:385px"></div><div class="plot" style="top:385px"></div><div class="gl" style="top:420px"></div><div class="gl" style="top:455px"></div><div class="gl" style="top:490px"></div><div class="lg" style="right:522.50px;top:385.5px;color:#ff0000">Fuel Trim 1 (%)</div><div class="lg" style="right:433.50px;top:385.5px;color:#00f0f0">Oil Pressure (psi)</div><div class="lg" style="right:522.50px;top:427.5px;color:#ffffff">Fuel Trim 2 (%)</div><div class="lg" style="right:434.60px;top:427.5px;color:#ff8040;letter-spacing:-0.1px">Meth Press (psi)</div><div class="lg" style="right:522.50px;top:469.5px;color:#ffff00">Fuel (psi)</div><div class="pan" style="top:526px"></div><div class="plot" style="top:526px"></div><div class="gl" style="top:561px"></div><div class="gl" style="top:596px"></div><div class="gl" style="top:631px"></div><div class="lg" style="right:522.62px;top:526.5px;color:#ffffff;letter-spacing:-0.12px">EQ Cmd (λ)</div><div class="lg" style="right:525.25px;top:568.5px;color:#ffff00;letter-spacing:-0.25px">WB Lambda (λ)</div><div class="pan" style="top:667px"></div><div class="plot" style="top:667px"></div><div class="gl" style="top:702px"></div><div class="gl" style="top:737px;background:repeating-linear-gradient(90deg,#ff0000 0,#ff0000 3px,#b80000 3px,#b80000 4px)"></div><div class="gl" style="top:772px"></div><div class="lg" style="right:524.20px;top:667.5px;color:#00f000;letter-spacing:-0.2px">O2 B2S1 (V)</div><div class="lg" style="right:434.50px;top:667.5px;color:#ffffff">Injector (ms)</div><div class="lg" style="right:524.20px;top:709.5px;color:#e878e8;letter-spacing:-0.2px">O2 B1S1 (V)</div><div class="lg" style="right:522.50px;top:751.5px;color:#ff0000">Boost (psi)</div><div class="pan" style="top:808px"></div><div class="plot" style="top:808px"></div><div class="gl" style="top:843px"></div><div class="gl" style="top:878px"></div><div class="gl" style="top:913px"></div><div class="lg" style="right:523.30px;top:808.5px;color:#ff0000;letter-spacing:-0.3px">KR (°)</div><div class="lg" style="right:436.69px;top:808.5px;color:#ffff00;letter-spacing:-0.19px">Idle Adapt (°)</div><div class="lg" style="right:523.15px;top:850.5px;color:#ff8000;letter-spacing:-0.15px">Advance (°)</div><div class="lg" style="right:436.66px;top:850.5px;color:#00f0f0;letter-spacing:-0.16px">Ethanol Adv (°)</div><div class="lg" style="right:523.00px;top:892.5px;color:#00f000">IAT Adv. (°)</div><div class="lg" style="right:434.50px;top:892.5px;color:#e878e8">Alcohol (%)</div></body></html>
